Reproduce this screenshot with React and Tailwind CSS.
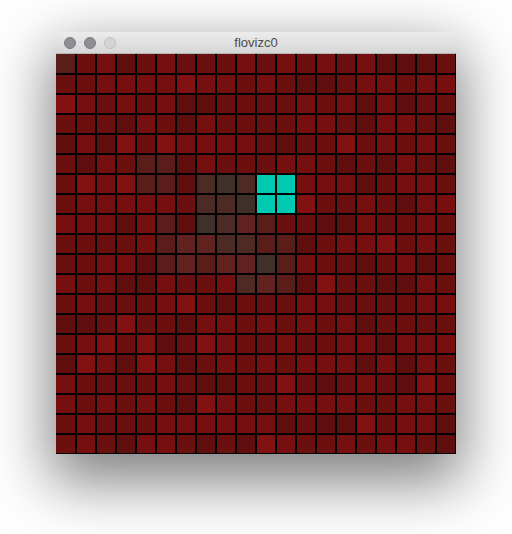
const PALETTE = {
  A: '#761010',
  B: '#6c0f0f',
  C: '#600e0e',
  D: '#821111',
  E: '#5a1d1a',
  F: '#4e2a24',
  G: '#40302a',
  H: '#62221f',
  X: '#00c9b1',
}

// 20x20 cell map, one letter per cell
const ROWS = [
  'EBACBABBBABABABACCCB',
  'BBAAAADAABABCCBAABAA',
  'DABABACCBBBBABACACBB',
  'BBBCABCABBBBAABCAABC',
  'CACDBDAAAABCBBDBABAB',
  'BCABEECABBBAABCBCABC',
  'BDADEECFGFXXAAACBAAB',
  'BAAAAABFFGXXDBBABCAA',
  'AAACAECGFHEBBCCABBAB',
  'BBBBAEHHFFEECBAADBAB',
  'BBAACEHEHHGEABBCBACB',
  'ABACCABBAFHECDBBCCAB',
  'BABBBADBCBBBAABBBBAA',
  'CCBDBBCAABABABACBBBB',
  'BADBDCBDABBABBAACAAA',
  'CDACDACBABABAAACACAB',
  'ABBBBABCCBBDBCBABCDB',
  'ABABABCDABBAAAABBAAB',
  'BABBBAAAAAACBCCDBAAC',
  'BABCAABCBCDABBABAABC',
]

export default function App() {
  return (
    <div className="w-[512px] h-[534px] bg-white pt-[32px] pl-[56px] overflow-hidden" style={{ fontFamily: '"Liberation Sans", Arial, sans-serif' }}>
      <div className="w-[400px] rounded-t-[5px] shadow-[0_22px_60px_6px_rgba(0,0,0,0.5)]">
        {/* Title bar */}
        <div className="relative h-[22px] rounded-t-[5px] bg-gradient-to-b from-[#ececec] to-[#d6d6d6] border-b border-[#b4b4b4] flex items-center justify-center">
          <div className="absolute left-[8px] top-[5px] flex gap-[8px]">
            <span className="w-[12px] h-[12px] rounded-full bg-[#8e8e92] border border-[#7c7c80]" />
            <span className="w-[12px] h-[12px] rounded-full bg-[#8e8e92] border border-[#7c7c80]" />
            <span className="w-[12px] h-[12px] rounded-full bg-[#d4d4d4] border border-[#c0c0c0]" />
          </div>
          <span className="text-[13px] text-[#4a4a4a] leading-none">flovizc0</span>
        </div>

        {/* Cell grid: 2px strokes between cells, 1px on the outer right/bottom edge */}
        <div className="grid grid-cols-[19px_repeat(19,18px)] grid-rows-[19px_repeat(19,18px)] gap-[2px] bg-black pr-px pb-px">
          {ROWS.map((row, r) =>
            row.split('').map((ch, c) => (
              <div key={`${r}-${c}`} style={{ background: PALETTE[ch] }} />
            ))
          )}
        </div>
      </div>
    </div>
  )
}
